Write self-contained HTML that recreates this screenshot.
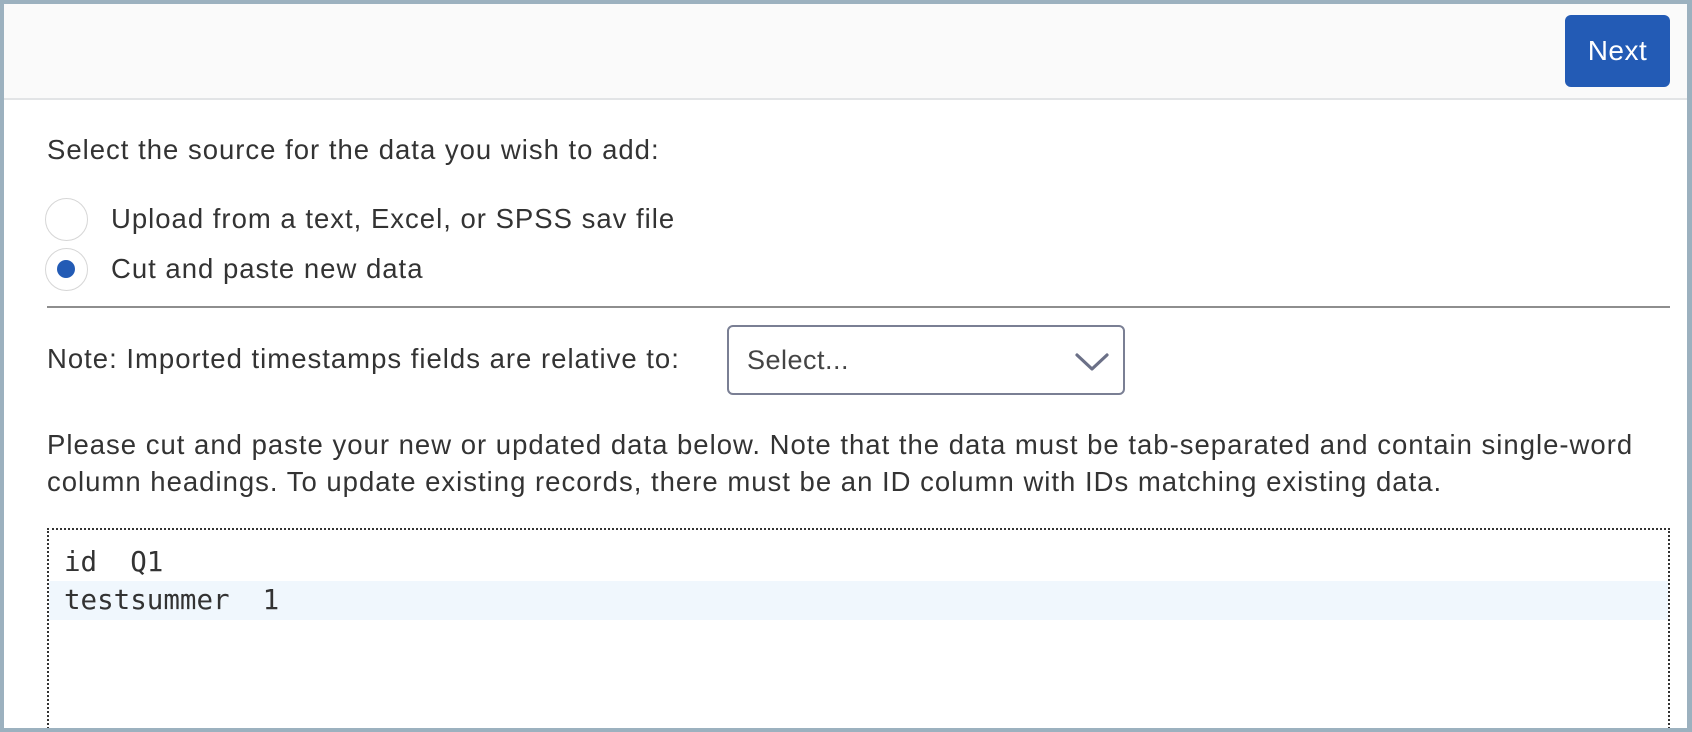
<!DOCTYPE html>
<html><head><meta charset="utf-8"><style>
html,body{margin:0;padding:0;}
body{width:1692px;height:732px;overflow:hidden;background:#9cb1bf;font-family:"Liberation Sans",sans-serif;color:#333;position:relative;}
.frame{position:absolute;left:4px;top:4px;width:1683px;height:724px;background:#fff;overflow:hidden;}
.hdr{position:absolute;left:0;top:0;right:0;height:94px;background:#fafafa;border-bottom:2px solid #e2e4e6;}
.next{position:absolute;left:1561px;top:11px;width:105px;height:72px;background:#235bb5;border-radius:6px;color:#fff;font-size:28px;line-height:72px;text-align:center;letter-spacing:0.5px;}
.t{position:absolute;left:43px;font-size:27.5px;letter-spacing:1.0px;white-space:nowrap;line-height:32px;}
.radio{position:absolute;left:41px;width:43px;height:43px;border:1.5px solid #d6d6d6;border-radius:50%;background:#fff;box-sizing:border-box;}
.dot{position:absolute;left:11px;top:11px;width:18px;height:18px;border-radius:50%;background:#235bb5;}
.hr{position:absolute;left:43px;top:302px;width:1623px;height:2px;background:#8e8e8e;}
.sel{position:absolute;left:723px;top:321px;width:398px;height:70px;border:2px solid #7a7f94;border-radius:6px;box-sizing:border-box;}
.sel span{position:absolute;left:18px;top:18px;font-size:27px;letter-spacing:0.5px;color:#444;}
.ta{position:absolute;left:43px;top:524px;width:1623px;height:220px;border:2px dotted #333;box-sizing:border-box;border-bottom:none;}
.mono{position:absolute;left:15px;font-family:"DejaVu Sans Mono","Liberation Mono",monospace;font-size:27.5px;white-space:pre;color:#333;}
.hl{position:absolute;left:0;right:0;top:51px;height:39px;background:#f0f7fd;}
</style></head><body>
<div class="frame">
<div class="hdr"><div class="next">Next</div></div>
<div class="t" style="top:130px">Select the source for the data you wish to add:</div>
<div class="radio" style="top:194px"></div>
<div class="t" style="left:107px;top:199px">Upload from a text, Excel, or SPSS sav file</div>
<div class="radio" style="top:244px"><div class="dot"></div></div>
<div class="t" style="left:107px;top:249px">Cut and paste new data</div>
<div class="hr"></div>
<div class="t" style="top:339px">Note: Imported timestamps fields are relative to:</div>
<div class="sel"><span>Select...</span>
<svg style="position:absolute;left:345px;top:25px" width="36" height="20" viewBox="0 0 36 20"><path d="M3 3 L18 17 L33 3" fill="none" stroke="#6b7087" stroke-width="3.2" stroke-linecap="round" stroke-linejoin="round"/></svg></div>
<div class="t" style="top:425px">Please cut and paste your new or updated data below. Note that the data must be tab-separated and contain single-word</div>
<div class="t" style="top:462px">column headings. To update existing records, there must be an ID column with IDs matching existing data.</div>
<div class="ta">
<div class="hl"></div>
<div class="mono" style="top:16px">id  Q1</div>
<div class="mono" style="top:54px">testsummer  1</div>
</div>
</div>
</body></html>
